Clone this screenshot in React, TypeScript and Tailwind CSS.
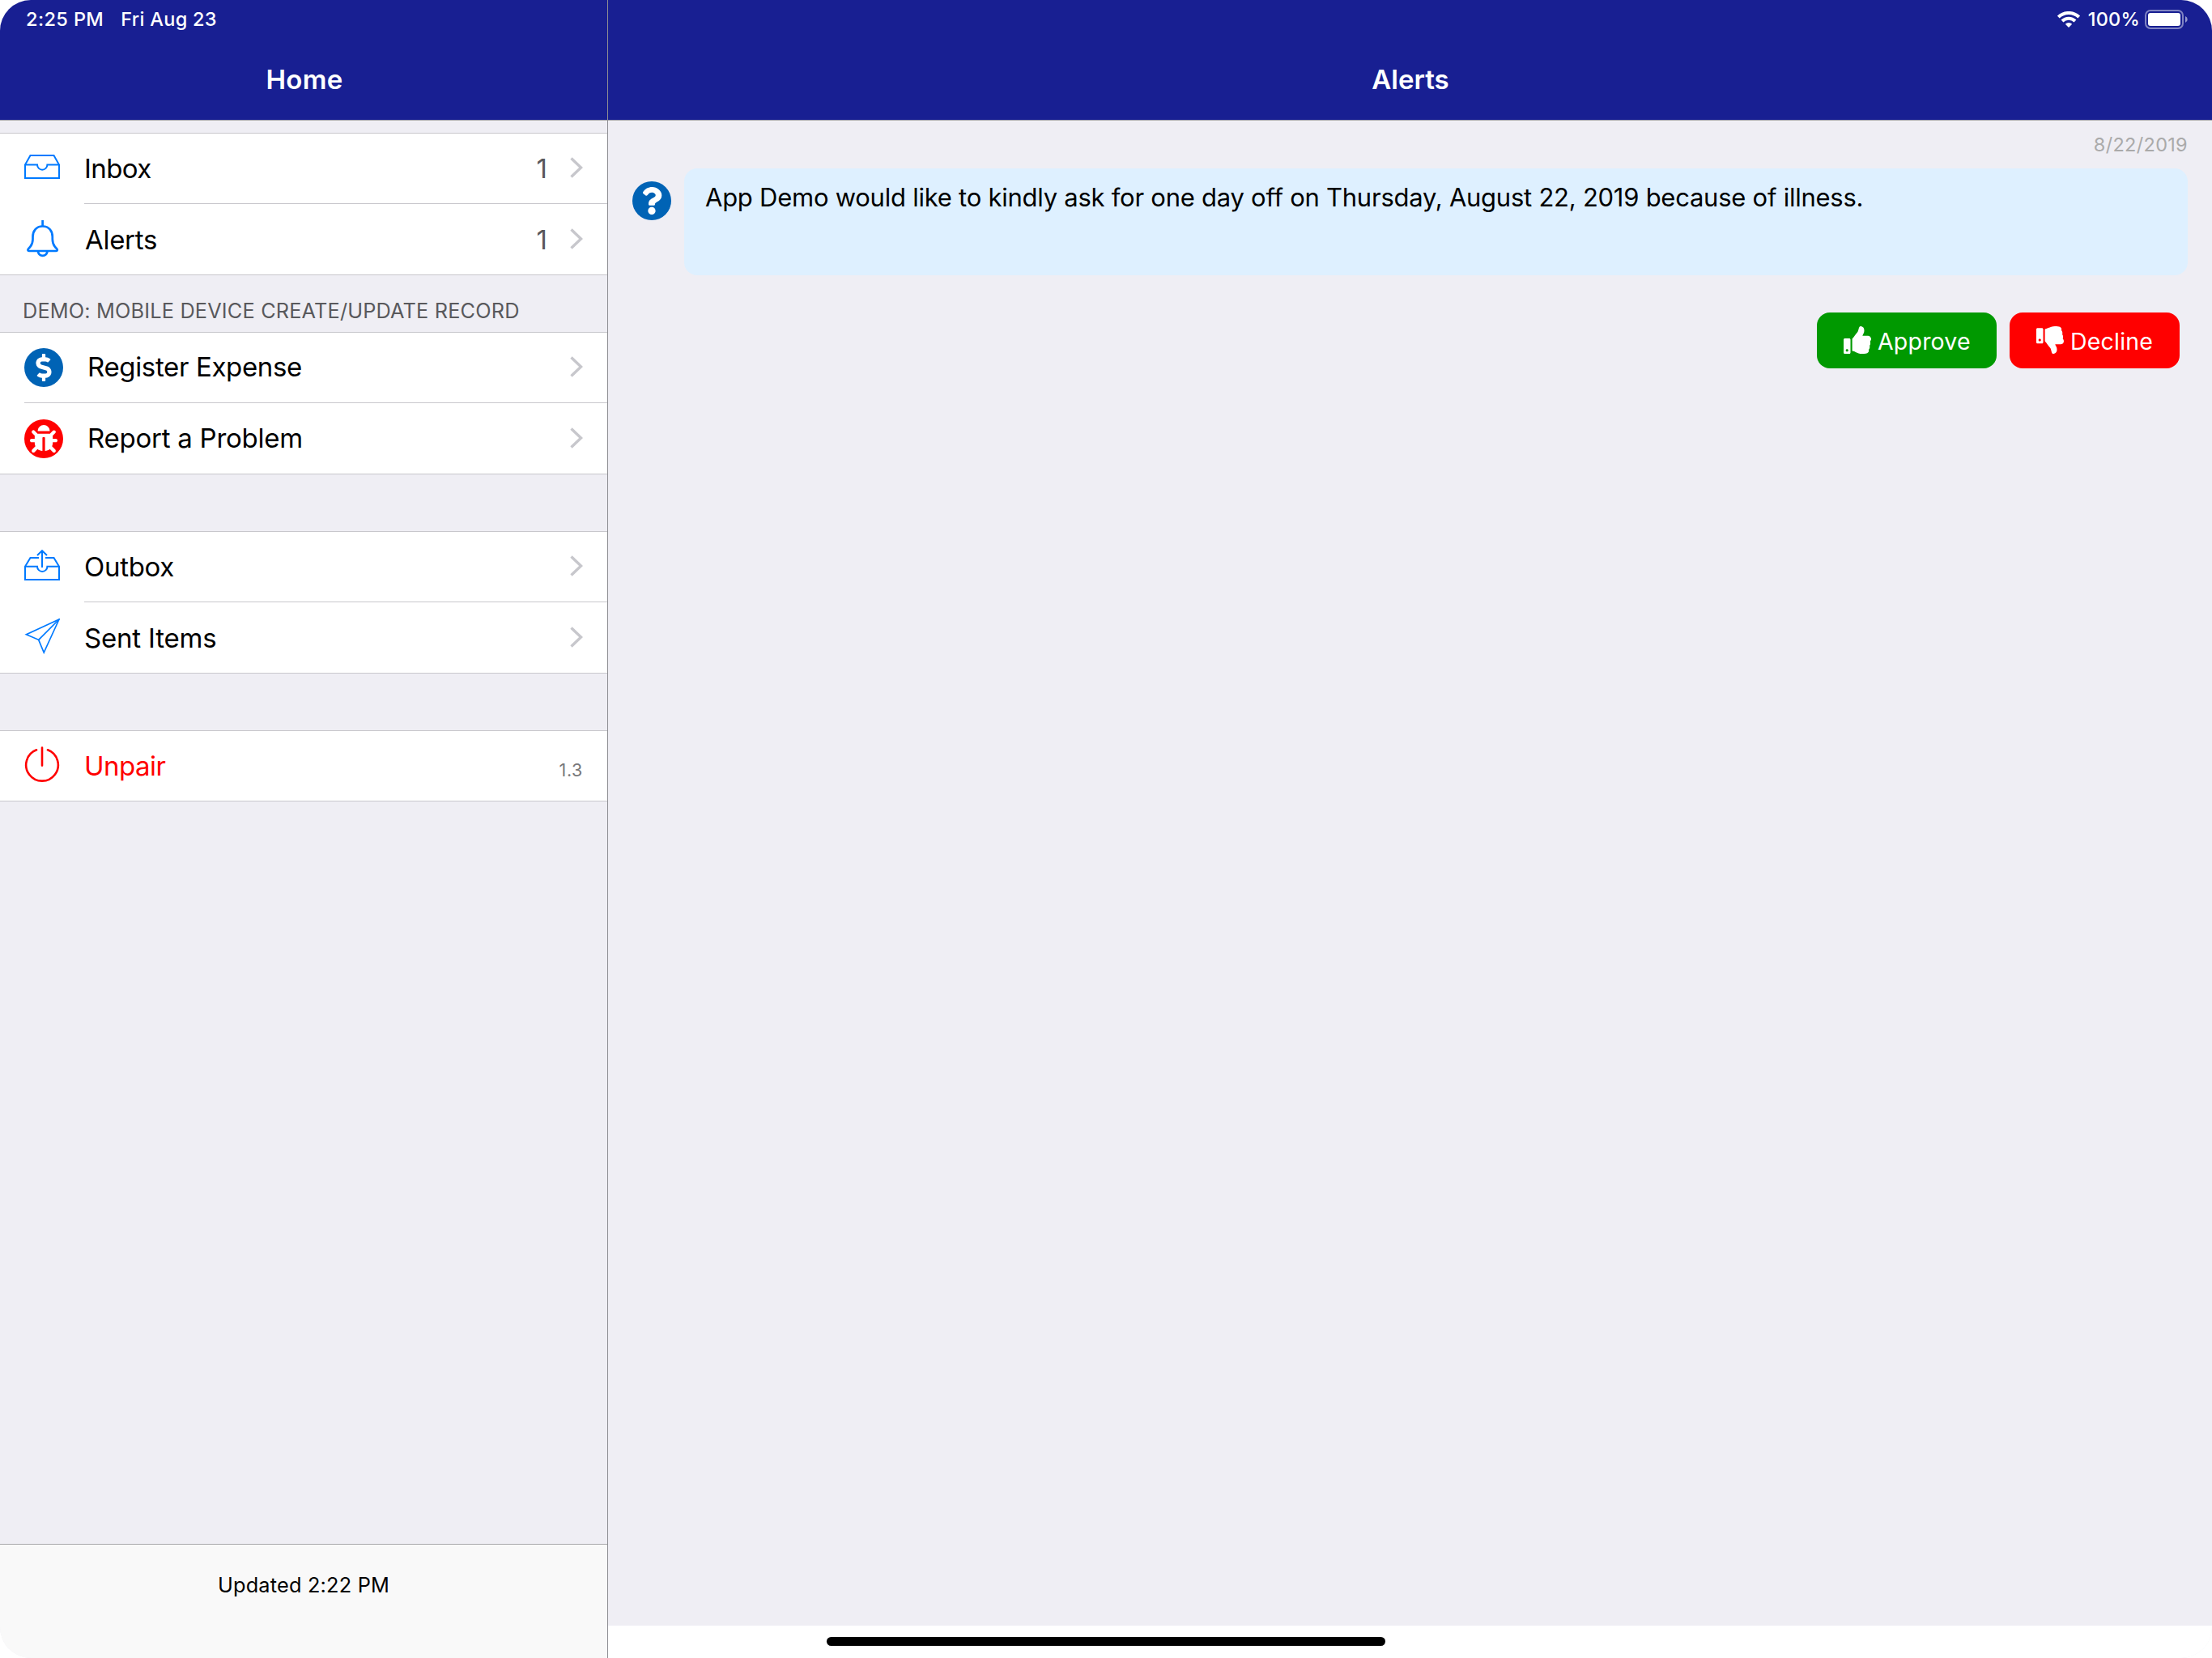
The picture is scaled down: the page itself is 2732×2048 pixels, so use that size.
import type { ReactNode } from 'react';
import { FaBug, FaDollarSign, FaQuestion, FaThumbsDown, FaThumbsUp } from 'react-icons/fa';
import clsx from 'clsx';

function InboxIcon() {
  return (
    <svg width="44" height="30" viewBox="0 0 44 30" fill="none" stroke="#007aff" strokeWidth="2" className="mb-1">
      <path d="M1 12.5 7.5 1h29L43 12.5V29H1z" />
      <path d="M1 12.5h15a6.2 6.2 0 0 0 12.4 0H43" />
    </svg>
  );
}

function BellIcon() {
  return (
    <svg width="45" height="46" viewBox="0 0 45 46" fill="none" stroke="#007aff" strokeWidth="2.7" className="mb-0.5">
      <path d="M22.6 0v7.5" />
      <path d="M22.6 7.5c-8 0-12.1 6-12.1 13v3c0 4-1 6.7-3.3 9.5L5 35.400c-1.200 1.400-.6 2.600 1.200 2.600H39c1.800 0 2.400-1.200 1.200-2.600L38 33c-2.300-2.800-3.200-5.500-3.200-9.500v-3c0-7-4.200-13-12.200-13z" />
      <path d="M16.800 38.500c.8 3.400 3 5.300 5.900 5.300s5.100-1.900 5.900-5.300" />
    </svg>
  );
}

function OutboxIcon() {
  return (
    <svg width="44" height="38" viewBox="0 0 44 38" fill="none" stroke="#007aff" strokeWidth="2" className="mb-1">
      <path d="M18 10H7.500L1 20.700V37h42V20.700L36.500 10H26" />
      <path d="M1 20.700h15a6.200 6.200 0 0 0 12.400 0H43" />
      <path d="M22 22V1.500M16 7l6-5.800L28 7" />
    </svg>
  );
}

function SentIcon() {
  return (
    <svg width="44" height="44" viewBox="0 0 44 44" fill="none" stroke="#007aff" strokeWidth="1.7" className="mb-1">
      <path d="M43 1 2.500 19.700l15.200 6.600L24.200 42z" />
      <path d="M17.700 26.300 43 1" />
    </svg>
  );
}

function PowerIcon() {
  return (
    <svg width="44" height="44" viewBox="0 0 44 44" fill="none" stroke="#ff0000" strokeWidth="2.6" strokeLinecap="round" className="mb-1">
      <path d="M15 4.300a19.800 19.800 0 1 0 14 0M22 1.600v22" />
    </svg>
  );
}

function Chevron() {
  return (
    <svg width="16" height="26" viewBox="0 0 16 26" fill="none" stroke="#c7c7cc" strokeWidth="3.400" className="mb-0.5">
      <path d="M1.500 1.500 13.600 13 1.500 24.500" />
    </svg>
  );
}

function Badge({ className, children }: { className: string; children: ReactNode }) {
  return (
    <span className={clsx('flex size-12 shrink-0 items-center justify-center rounded-full text-[34px] text-white', className)}>
      {children}
    </span>
  );
}

type RowProps = {
  icon: ReactNode;
  label: string;
  count?: number;
  labelClass?: string;
  trailing?: ReactNode;
};

function Row({ icon, label, count, labelClass = 'tracking-[-0.3px]', trailing }: RowProps) {
  return (
    <div className="flex h-full items-center gap-[30px] pl-[30px] pr-[30px]">
      {icon}
      <span className={clsx('flex-1', labelClass)}>{label}</span>
      {count !== undefined && <span className="-mr-0.5 text-[#58585b]">{count}</span>}
      {trailing ?? <Chevron />}
    </div>
  );
}

function Group({ inset, children }: { inset?: string; children: ReactNode[] | ReactNode }) {
  const rows = Array.isArray(children) ? children : [children];
  return (
    <div className="border-y border-[#c8c7cc] bg-white text-[33px] leading-10 text-black">
      {rows.map((row, i) => (
        <div key={i}>
          {i > 0 && <div className={clsx('h-px bg-[#c8c7cc]', inset)} />}
          <div className={i > 0 ? 'h-[87px]' : 'h-[86px]'}>{row}</div>
        </div>
      ))}
    </div>
  );
}

function Sidebar() {
  return (
    <aside className="flex w-[750px] shrink-0 flex-col bg-[#efeef4]">
      <header className="h-[149px] border-b border-[#a3a3ab] bg-[#181f92] text-white">
        <div className="flex h-12 items-center gap-[21px] pl-8 text-[23.5px] font-medium">
          <span className="tracking-[0.4px]">2:25 PM</span>
          <span className="tracking-[0.3px]">Fri Aug 23</span>
        </div>
        <h1 className="flex h-[101px] items-center justify-center pl-0.5 text-[33px] font-semibold tracking-[0.3px]">Home</h1>
      </header>

      <nav className="flex-1 pt-[15px]">
        <Group inset="ml-[104px]">
          <Row icon={<InboxIcon />} label="Inbox" count={1} labelClass="tracking-[-0.6px]" />
          <Row icon={<BellIcon />} label="Alerts" count={1} />
        </Group>
        <h2 className="flex h-[70px] items-center pl-7 pt-[18px] text-[25.3px] tracking-[0.17px] text-[#59595c]">
          DEMO: MOBILE DEVICE CREATE/UPDATE RECORD
        </h2>
        <Group inset="ml-[30px]">
          <Row
            icon={<Badge className="bg-[#0063b5]"><FaDollarSign /></Badge>}
            label="Register Expense"
            labelClass="mb-0.5 tracking-[-0.35px]"
          />
          <Row
            icon={<Badge className="bg-[#ff0000]"><FaBug /></Badge>}
            label="Report a Problem"
            labelClass="mb-0.5 tracking-[-0.25px]"
          />
        </Group>
        <div className="h-[70px]" />
        <Group inset="ml-[104px]">
          <Row icon={<OutboxIcon />} label="Outbox" />
          <Row icon={<SentIcon />} label="Sent Items" labelClass="tracking-[-0.2px]" />
        </Group>
        <div className="h-[70px]" />
        <Group>
          <Row
            icon={<PowerIcon />}
            label="Unpair"
            labelClass="tracking-[-0.5px] text-[#ff0000]"
            trailing={<span className="mt-[10px] text-[21.5px] tracking-[0.6px] text-[#77777a]">1.3</span>}
          />
        </Group>
      </nav>

      <footer className="flex h-[141px] justify-center border-t border-[#a8a8ab] bg-[#f9f9f9] pt-[31px] text-[25.3px] leading-[37px] tracking-[0.2px] text-black">
        Updated 2:22 PM
      </footer>
    </aside>
  );
}

function StatusIcons() {
  return (
    <div className="flex h-12 items-center justify-end pr-[29px]">
      <svg width="28" height="20" viewBox="0 0 28 20" fill="none" stroke="#fff" strokeWidth="4">
        <path d="M1.300 7.100a18.200 18.200 0 0 1 25.400 0" />
        <path d="M6 12a11.500 11.500 0 0 1 16 0" />
        <path d="M14 20 9.800 15.800a6 6 0 0 1 8.400 0z" fill="#fff" stroke="none" />
      </svg>
      <span className="ml-2.5 text-[23.5px] font-medium tracking-[0.2px] text-white">100%</span>
      <svg width="54" height="24" viewBox="0 0 54 24" className="ml-[6px]">
        <rect x="1" y="1" width="46" height="22" rx="6" fill="none" stroke="#fff" strokeOpacity="0.45" strokeWidth="2" />
        <rect x="4" y="4" width="40" height="16" rx="3" fill="#fff" />
        <path d="M50 8a4.300 4.300 0 0 1 0 8z" fill="#fff" fillOpacity="0.55" />
      </svg>
    </div>
  );
}

function AlertsPane() {
  return (
    <main className="flex min-w-0 flex-1 flex-col bg-[#efeef4]">
      <header className="h-[149px] border-b border-[#a3a3ab] bg-[#181f92] text-white">
        <StatusIcons />
        <h1 className="flex h-[101px] items-center justify-center pl-px text-[33px] font-semibold">Alerts</h1>
      </header>

      <section className="flex-1 pl-[30px] pr-[30px]">
        <div className="flex h-[59px] items-center justify-end text-[23.5px] tracking-[0.3px] text-[#aaaaaa]">8/22/2019</div>
        <div className="flex gap-4">
          <Badge className="mt-4 bg-[#0063b5]"><FaQuestion /></Badge>
          <p className="h-[132px] flex-1 rounded-2xl bg-[#def0ff] pl-[26px] pt-4 text-[31px] leading-10 tracking-[-0.25px] text-black">
            App Demo would like to kindly ask for one day off on Thursday, August 22, 2019 because of illness.
          </p>
        </div>
        <div className="mt-[46px] flex justify-end gap-4 pr-2.5 text-[28.5px] tracking-[0.2px] text-white">
          <button className="flex h-[69px] w-[222px] items-center rounded-2xl bg-[#009900] pl-[33px]">
            <FaThumbsUp className="mb-0.5 text-[34px]" />
            <span className="ml-2 pt-1">Approve</span>
          </button>
          <button className="flex h-[69px] w-[210px] items-center rounded-2xl bg-[#ff0000] pl-[33px]">
            <FaThumbsDown className="mb-0.5 text-[34px]" />
            <span className="ml-2 pt-1">Decline</span>
          </button>
        </div>
      </section>

      <div className="h-10 bg-white" />
    </main>
  );
}

export default function App() {
  return (
    <div className="h-[2048px] w-[2732px] bg-white font-['Inter',sans-serif]">
      <div className="relative flex h-full overflow-hidden rounded-[38px]">
        <Sidebar />
        <div className="w-px shrink-0 bg-[#8e8e93]" />
        <AlertsPane />
        <div className="absolute bottom-[15px] left-1/2 h-[11px] w-[690px] -translate-x-1/2 rounded-full bg-black" />
      </div>
    </div>
  );
}
